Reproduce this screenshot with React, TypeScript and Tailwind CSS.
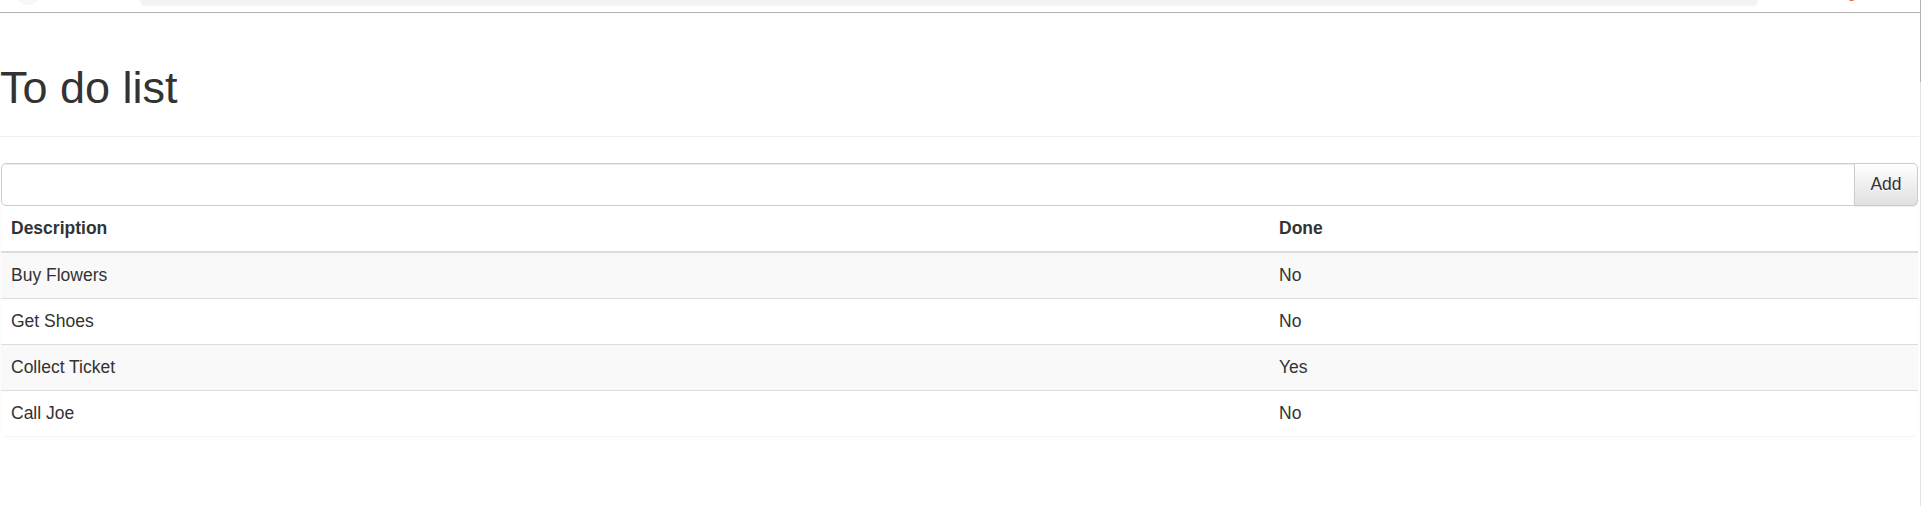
const todos = [
  { description: "Buy Flowers", done: false },
  { description: "Get Shoes", done: false },
  { description: "Collect Ticket", done: true },
  { description: "Call Joe", done: false },
];

function BrowserEdge() {
  return (
    <div className="flex h-[13px] items-start overflow-hidden border-b border-[#b4b4b4]">
      <div className="-mt-[23px] ml-[14px] h-[28px] w-[28px] shrink-0 rounded-full bg-[#f6f7f8]" />
      <div className="ml-[98px] h-[6px] w-[1618px] shrink-0 rounded-b-[6px] bg-[#f1f3f4]" />
      <div className="-mt-[8px] ml-[89px] h-[9px] w-[9px] shrink-0 rounded-full bg-[#f25b22]" />
    </div>
  );
}

export default function App() {
  return (
    <div className="flex min-h-[506px] bg-white font-['Liberation_Sans',Arial,sans-serif] text-[#333]">
      <div className="min-w-0 flex-1">
        <BrowserEdge />

        <main className="pt-[50px]">
          <div className="mr-px border-b border-[#eee] pb-[11px]">
            <h1 className="mb-[12.5px] text-[45px] font-normal leading-[49.5px]">To do list</h1>
          </div>

          <div className="ml-px mr-[2px] mt-[26px] flex h-[43px]">
            <input
              type="text"
              className="min-w-0 flex-1 rounded-l-[5px] border border-[#ccc] px-[15px] text-[17.5px] shadow-[inset_0_1px_1px_rgba(0,0,0,0.075)] outline-none"
            />
            <button className="-ml-px w-[64px] rounded-r-[5px] border border-[#ccc] bg-linear-to-b from-white to-[#e0e0e0] text-[17.5px] text-[#333] shadow-[0_1px_1px_rgba(0,0,0,0.075)] [text-shadow:0_1px_0_#fff]">
              Add
            </button>
          </div>

          <div className="ml-px mr-[2px] rounded-b-[5px] shadow-[0_1px_2px_rgba(0,0,0,0.05)]">
            <table className="w-full text-left text-[17.5px] leading-[25px]">
              <thead>
                <tr>
                  <th className="w-[1268px] border-b-2 border-[#ddd] p-[10px] font-bold">Description</th>
                  <th className="border-b-2 border-[#ddd] p-[10px] font-bold">Done</th>
                </tr>
              </thead>
              <tbody>
                {todos.map((todo, index) => (
                  <tr key={todo.description} className={index % 2 === 0 ? "bg-[#f9f9f9]" : "bg-white"}>
                    <td className={index > 0 ? "border-t border-[#ddd] p-[10px]" : "p-[10px]"}>{todo.description}</td>
                    <td className={index > 0 ? "border-t border-[#ddd] p-[10px]" : "p-[10px]"}>{todo.done ? "Yes" : "No"}</td>
                  </tr>
                ))}
              </tbody>
            </table>
          </div>
        </main>
      </div>

      <div className="flex w-px flex-col">
        <div className="h-[82px] bg-[#b3b3b3]" />
        <div className="flex-1 bg-[#e2e2e2]" />
      </div>
    </div>
  );
}
